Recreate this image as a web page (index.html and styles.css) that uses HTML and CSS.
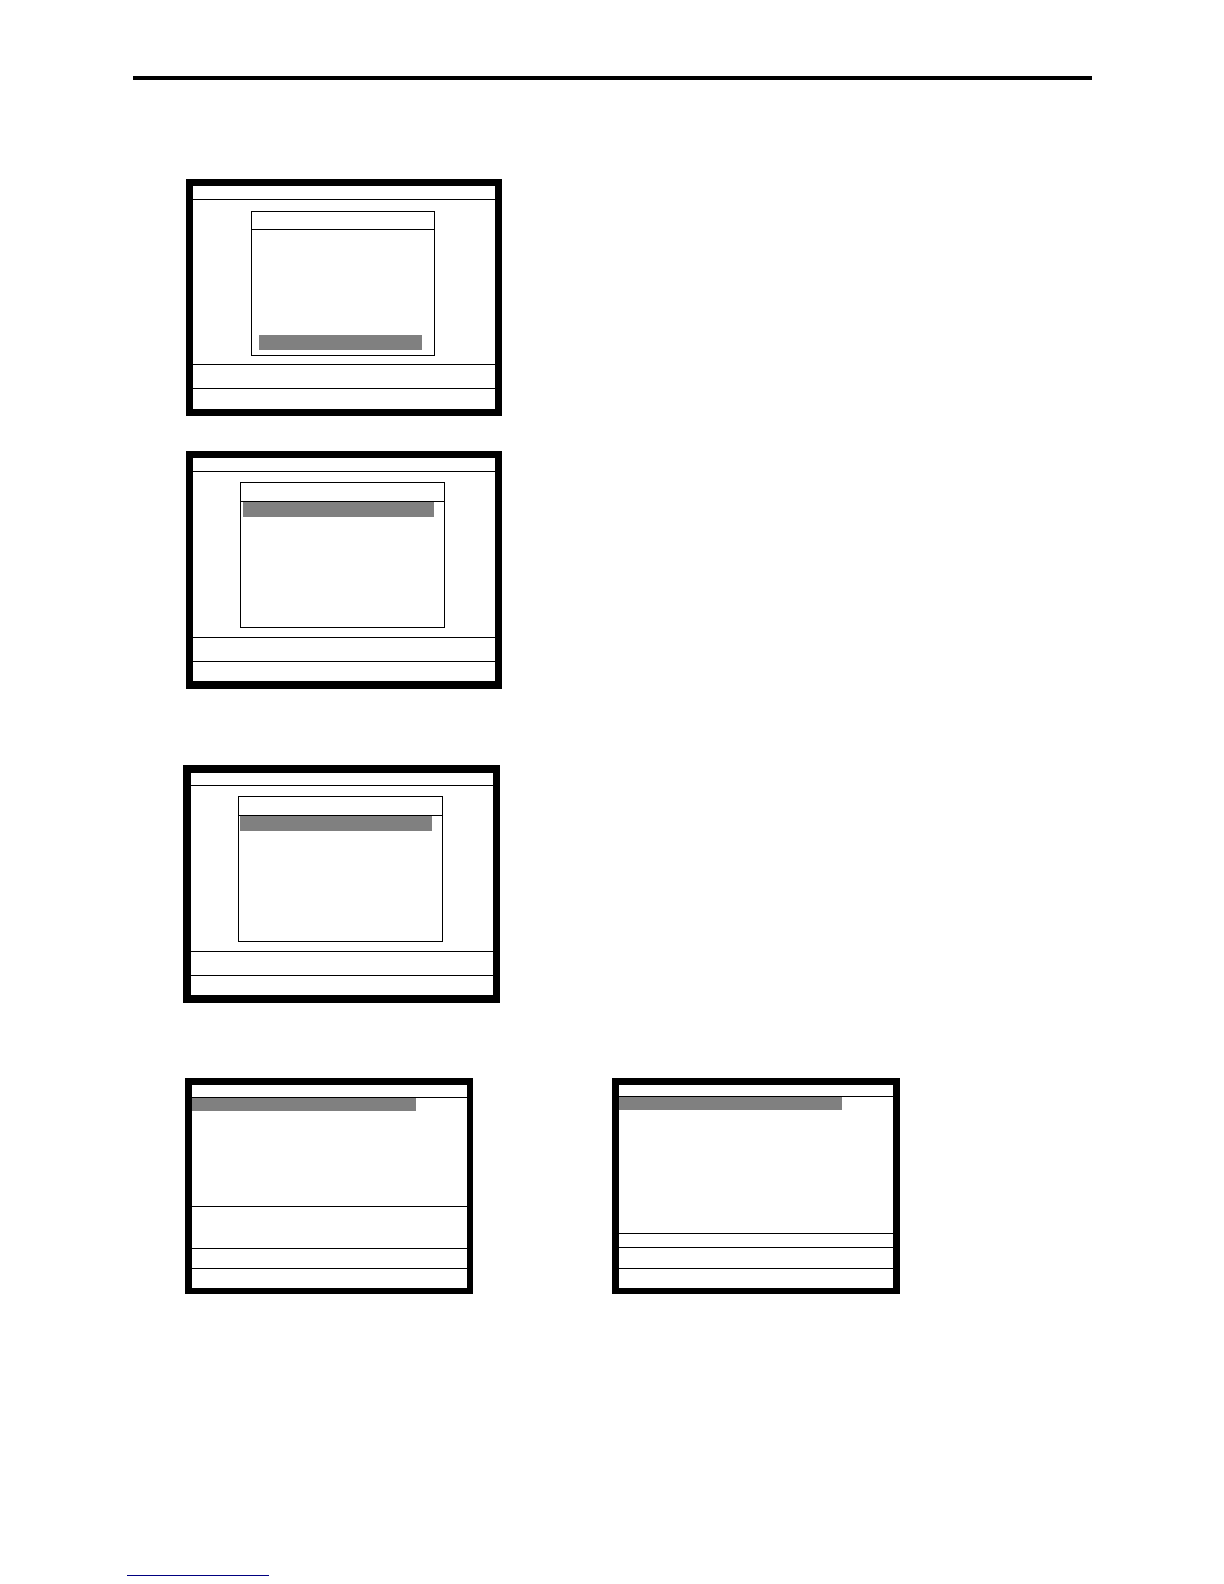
FILE: index.html
```html
<!DOCTYPE html>
<html lang="en">
<head>
  <meta charset="UTF-8" />
  <meta name="viewport" content="width=device-width, initial-scale=1" />
  <title>Program Screens</title>
  <link rel="stylesheet" href="styles.css">
</head>
<body>
  <header class="page-header"></header>

  <main class="screens">
    <section class="screen screen-menu">
      <div class="screen-title"></div>
      <div class="screen-body">
        <div class="dialog">
          <div class="dialog-title"></div>
          <div class="dialog-list">
            <div class="selected"></div>
          </div>
        </div>
      </div>
      <div class="message"></div>
      <div class="status"></div>
    </section>

    <section class="screen screen-options">
      <div class="screen-title"></div>
      <div class="screen-body">
        <div class="dialog">
          <div class="dialog-title"></div>
          <div class="dialog-list">
            <div class="selected"></div>
          </div>
        </div>
      </div>
      <div class="message"></div>
      <div class="status"></div>
    </section>

    <section class="screen screen-options screen-files">
      <div class="screen-title"></div>
      <div class="screen-body">
        <div class="dialog">
          <div class="dialog-title"></div>
          <div class="dialog-list">
            <div class="selected"></div>
          </div>
        </div>
      </div>
      <div class="message"></div>
      <div class="status"></div>
    </section>

    <div class="screen-row">
      <section class="screen screen-table">
        <div class="screen-title"></div>
        <div class="list">
          <div class="selected"></div>
        </div>
        <div class="detail"></div>
        <div class="message"></div>
        <div class="status"></div>
      </section>

      <section class="screen screen-table screen-table-long">
        <div class="screen-title"></div>
        <div class="list">
          <div class="selected"></div>
        </div>
        <div class="detail"></div>
        <div class="message"></div>
        <div class="status"></div>
      </section>
    </div>
  </main>

  <footer class="page-footer">
    <a class="footer-link" href="#" aria-label="Home"></a>
  </footer>
</body>
</html>
```

FILE: styles.css
```css
* {
  box-sizing: border-box;
}
body {
  margin: 0;
  padding: 76px 132px 0 127px;
  background: #fff;
  color: #000;
  font-family: "Liberation Sans", sans-serif;
}
.page-header {
  margin-left: 6px;
  border-top: 4px solid #000;
}
.screens {
  display: flex;
  flex-direction: column;
  align-items: flex-start;
  padding: 99px 0 0 59px;
}

/* screen frame */
.screen {
  display: flex;
  flex-direction: column;
  width: 316px;
  border: 7px solid #000;
}
.screen-title {
  height: 14px;
  border-bottom: 1px solid #000;
}
.screen-body {
  padding: 11px 60px 8px 58px;
}
.message {
  height: 24px;
  border-top: 1px solid #000;
}
.status {
  height: 21px;
  border-top: 1px solid #000;
}
.selected {
  height: 15px;
  background: #808080;
}

/* dialog inside a screen */
.dialog {
  border: 1px solid #000;
}
.dialog-title {
  height: 18px;
  border-bottom: 1px solid #000;
}
.dialog-list {
  display: flex;
  flex-direction: column;
  justify-content: flex-end;
  height: 125px;
  padding: 0 12px 5px 7px;
}

.screen-options {
  margin-top: 35px;
  border-bottom-width: 8px;
}
.screen-options .screen-body {
  padding: 10px 50px 9px 47px;
}
.screen-options .dialog-title {
  height: 19px;
}
.screen-options .dialog-list {
  justify-content: flex-start;
  padding: 0 10px 0 2px;
}
.screen-options .status {
  height: 20px;
}

.screen-files {
  width: 317px;
  margin: 76px 0 0 -3px;
  border-top-width: 8px;
  border-left-width: 8px;
}
.screen-files .screen-title {
  height: 13px;
}
.screen-files .dialog-list {
  padding-left: 1px;
}

/* table screens, side by side */
.screen-row {
  display: flex;
  gap: 139px;
  margin: 75px 0 0 -1px;
}
.screen-table {
  width: 288px;
  border-right-width: 6px;
  border-bottom-width: 6px;
}
.screen-table .screen-title {
  height: 13px;
}
.screen-table .list {
  height: 108px;
  padding-right: 51px;
}
.screen-table .selected {
  height: 13px;
}
.screen-table .detail {
  height: 42px;
  border-top: 1px solid #000;
}
.screen-table .message,
.screen-table .status {
  height: 20px;
}

.screen-table-long {
  border-right-width: 7px;
}
.screen-table-long .screen-title {
  height: 12px;
}
.screen-table-long .list {
  height: 136px;
}
.screen-table-long .detail {
  height: 14px;
}
.screen-table-long .message {
  height: 21px;
}

.page-footer {
  padding-top: 264px;
}
.footer-link {
  display: block;
  width: 142px;
  height: 18px;
  border-bottom: 1px solid #000080;
}
```
